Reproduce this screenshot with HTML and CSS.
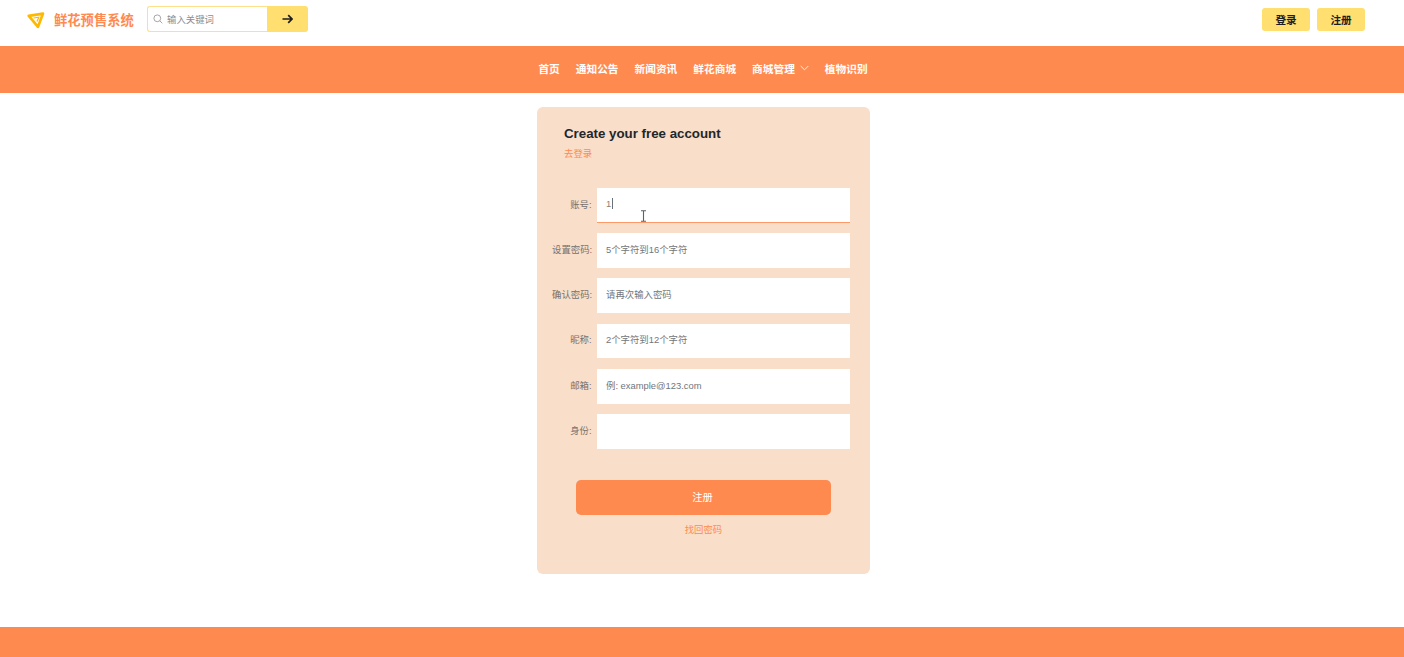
FILE: index.html
```html
<!DOCTYPE html>
<html lang="zh">
<head>
<meta charset="utf-8">
<title>鲜花预售系统</title>
<link rel="stylesheet" href="styles.css">
</head>
<body>
<header class="topbar">
  <div class="brand">
    <svg class="logo" width="18" height="17" viewBox="0 0 18 17"><path d="M1.8 3.9 16 1.6 11 14.8Z" fill="none" stroke="#ffb800" stroke-width="2.7" stroke-linejoin="round"/><path d="M6.6 6 11.8 5.2 10 9.6" fill="none" stroke="#ffb800" stroke-width="1.2"/></svg>
    <span class="brand-name">鲜花预售系统</span>
  </div>
  <form class="search">
    <div class="search-field">
      <svg width="10" height="10" viewBox="0 0 10 10"><circle cx="4.3" cy="4.3" r="3.4" fill="none" stroke="#a5a5a5" stroke-width="1"/><path d="M6.8 6.8 9.3 9.3" stroke="#a5a5a5" stroke-width="1"/></svg>
      <span>输入关键词</span>
    </div>
    <div class="search-btn">
      <svg width="11" height="10" viewBox="0 0 11 10"><path d="M.5 5H9.8M6.2 1.2 10 5 6.2 8.8" fill="none" stroke="#1d1d1f" stroke-width="1.7"/></svg>
    </div>
  </form>
  <div class="auth">
    <a class="auth-btn">登录</a>
    <a class="auth-btn">注册</a>
  </div>
</header>
<nav class="nav">
  <a>首页</a><a>通知公告</a><a>新闻资讯</a><a>鲜花商城</a>
  <a class="has-menu">商城管理<svg width="9" height="6" viewBox="0 0 9 6"><path d="M.7 1 4.5 4.8 8.3 1" fill="none" stroke="#fff" stroke-width=".9"/></svg></a>
  <a>植物识别</a>
</nav>
<main class="main">
  <section class="card">
    <h1 class="title">Create your free account</h1>
    <a class="login-link">去登录</a>
    <div class="fields">
      <div class="row">
        <label class="lab">账号:</label>
        <div class="box active"><span class="val">1</span><i class="caret"></i>
          <svg class="mouse" width="7" height="12" viewBox="0 0 7 12"><path d="M1 .8H6M3.5 .8V11.2M1 11.2H6" fill="none" stroke="#56626a" stroke-width="1.1"/></svg>
        </div>
      </div>
      <div class="row"><label class="lab">设置密码:</label><div class="box">5个字符到16个字符</div></div>
      <div class="row"><label class="lab">确认密码:</label><div class="box">请再次输入密码</div></div>
      <div class="row"><label class="lab">昵称:</label><div class="box">2个字符到12个字符</div></div>
      <div class="row"><label class="lab">邮箱:</label><div class="box">例: example@123.com</div></div>
      <div class="row"><label class="lab">身份:</label><div class="box"></div></div>
    </div>
    <button class="submit" type="button">注册</button>
    <a class="forgot">找回密码</a>
  </section>
</main>
<footer class="footer"></footer>
</body>
</html>
```
FILE: styles.css
```css
* { box-sizing: border-box; }
html, body { margin: 0; height: 100%; }
body {
  width: 1404px;
  height: 657px;
  overflow: hidden;
  background: #fff;
  display: flex;
  flex-direction: column;
  font-family: "Liberation Sans", "Noto Sans CJK SC", sans-serif;
}
.topbar {
  height: 46px;
  display: flex;
  align-items: center;
  padding: 0 39px 8px 27px;
}
.brand { display: flex; align-items: center; gap: 9px; width: 120px; }
.logo { flex: none; margin-top: 3px; }
.brand-name { font-size: 13.3px; font-weight: 700; color: #ff8a50; white-space: nowrap; margin-top: 1px; }
.search { display: flex; height: 26.5px; width: 161px; }
.search-field {
  width: 120px;
  display: flex;
  align-items: center;
  gap: 4px;
  padding: 0 0 1px 5px;
  border: 1px solid #ffe08a;
  border-right: 0;
  border-radius: 3px 0 0 3px;
  font-size: 9.4px;
  color: #8d8d8d;
}
.search-btn {
  flex: 1;
  background: #ffdf6f;
  border-radius: 0 3px 3px 0;
  display: flex;
  align-items: center;
  justify-content: center;
}
.auth { margin-left: auto; display: flex; gap: 7px; margin-top: 1px; }
.auth-btn {
  width: 48px;
  height: 23.5px;
  background: #ffdf6f;
  border-radius: 3px;
  display: flex;
  align-items: center;
  justify-content: center;
  font-size: 10.6px;
  font-weight: 700;
  color: #1d1d1f;
}
.nav {
  height: 47px;
  background: #ff8a50;
  display: flex;
  align-items: center;
  justify-content: center;
  gap: 16px;
  padding: 0 0 3px 2px;
  font-size: 10.7px;
  font-weight: 700;
  color: #fff;
}
.has-menu { display: flex; align-items: center; gap: 5px; }
.main { flex: 1; display: flex; justify-content: center; padding: 14px 0 0 3px; }
.card {
  width: 333px;
  height: 467px;
  background: #f9dec9;
  border-radius: 6px;
  display: flex;
  flex-direction: column;
  padding: 18px 20px 0 15px;
}
.title { margin: 0 0 0 12px; font-size: 13.3px; line-height: 17px; font-weight: 700; color: #23262b; }
.login-link { margin: 5px 0 0 12px; font-size: 9.4px; line-height: 13px; color: #ff8a50; }
.fields { display: flex; flex-direction: column; gap: 10.4px; margin-top: 28px; }
.row { display: flex; align-items: center; height: 34.8px; }
.lab { width: 39.5px; margin: 0 5.5px 3px 0; text-align: right; font-size: 9.4px; color: #75716e; white-space: nowrap; flex: none; }
.box {
  position: relative;
  flex: 1;
  height: 100%;
  background: #fff;
  display: flex;
  align-items: center;
  padding: 0 0 3px 9px;
  font-size: 9.4px;
  color: #70767c;
}
.box.active { border-bottom: 1px solid #ff9a68; padding-bottom: 2px; }
.val { color: #8a8178; }
.caret { display: inline-block; width: 1px; height: 11px; background: #66727a; margin-left: 1px; }
.mouse { position: absolute; left: 43px; top: 22px; }
.submit {
  width: 255px;
  height: 35px;
  margin: 31.5px 0 0 24px;
  padding: 0 2px 2px 0;
  border: 0;
  border-radius: 5px;
  background: #ff8a50;
  color: #fff;
  font: inherit;
  font-size: 10.3px;
}
.forgot { margin: 8px 0 0 24px; width: 255px; text-align: center; font-size: 9.4px; line-height: 14px; color: #ff8a50; }
.footer { height: 30px; background: #ff8a50; flex: none; }
```
